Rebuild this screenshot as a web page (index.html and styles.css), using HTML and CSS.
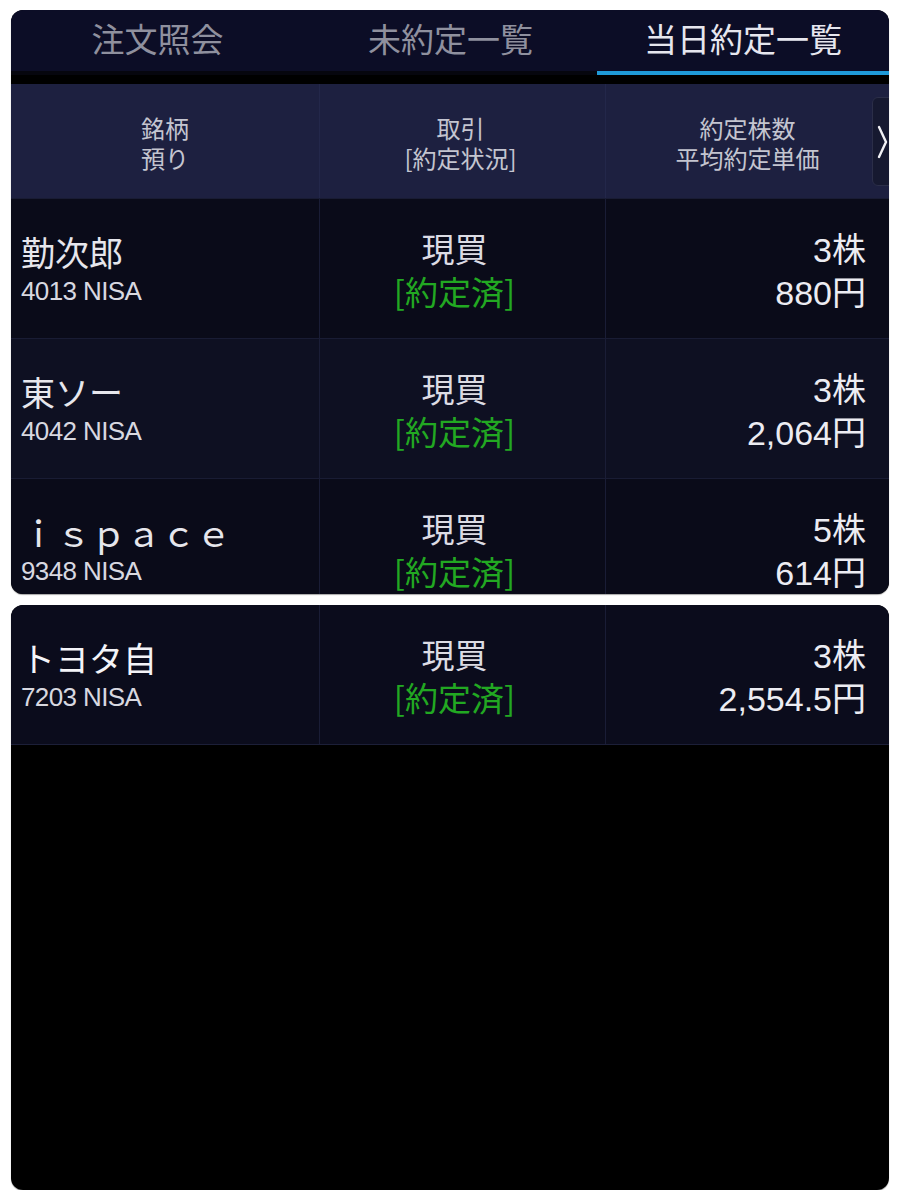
FILE: index.html
```html
<!DOCTYPE html>
<html lang="ja">
<head>
<meta charset="utf-8">
<title>当日約定一覧</title>
<link rel="stylesheet" href="styles.css">
</head>
<body>
<div class="panel top">
  <div class="tabs">
    <div class="tab">注文照会</div>
    <div class="tab">未約定一覧</div>
    <div class="tab active">当日約定一覧</div>
  </div>
  <div class="strip"></div>
  <div class="head">
    <div class="hcell"><div>銘柄</div><div>預り</div></div>
    <div class="hcell"><div>取引</div><div>[約定状況]</div></div>
    <div class="hcell"><div>約定株数</div><div>平均約定単価</div></div>
    <div class="scroll-btn">
      <svg width="14" height="34" viewBox="0 0 14 34"><polyline points="3,2 10,17 3,32" fill="none" stroke="#f0f0f4" stroke-width="2.4" stroke-linecap="round" stroke-linejoin="round"/></svg>
    </div>
  </div>
  <div class="row dark">
    <div class="cell name"><div class="nm">勤次郎</div><div class="code">4013 NISA</div></div>
    <div class="cell trade"><div class="kind">現買</div><div class="status">[約定済]</div></div>
    <div class="cell qty"><div>3株</div><div>880円</div></div>
  </div>
  <div class="row light">
    <div class="cell name"><div class="nm">東ソー</div><div class="code">4042 NISA</div></div>
    <div class="cell trade"><div class="kind">現買</div><div class="status">[約定済]</div></div>
    <div class="cell qty"><div>3株</div><div>2,064円</div></div>
  </div>
  <div class="row dark">
    <div class="cell name"><div class="nm wide">ｉｓｐａｃｅ</div><div class="code">9348 NISA</div></div>
    <div class="cell trade"><div class="kind">現買</div><div class="status">[約定済]</div></div>
    <div class="cell qty"><div>5株</div><div>614円</div></div>
  </div>
</div>
<div class="panel bottom">
  <div class="row mid">
    <div class="cell name"><div class="nm bright">トヨタ自</div><div class="code">7203 NISA</div></div>
    <div class="cell trade"><div class="kind">現買</div><div class="status">[約定済]</div></div>
    <div class="cell qty"><div>3株</div><div>2,554.5円</div></div>
  </div>
</div>
</body>
</html>
```
FILE: styles.css
```css
html, body {
  margin: 0;
  padding: 0;
  background: #ffffff;
}
body {
  padding: 10px 11px 0 11px;
  font-family: "Liberation Sans", "Noto Sans CJK JP", sans-serif;
  color: #e8e8ee;
}
.panel {
  width: 878px;
  border-radius: 12px;
  overflow: hidden;
  background: #000;
  box-shadow: 0 1px 1px rgba(0,0,0,0.35);
}
.top {
  height: 584px;
}
.bottom {
  margin-top: 11px;
  height: 585px;
}
.tabs {
  display: grid;
  grid-template-columns: 293px 293px 292px;
  background: #0c0d26;
}
.tab {
  height: 65px;
  display: flex;
  align-items: center;
  justify-content: center;
  padding-bottom: 6px;
  box-sizing: border-box;
  font-family: "Noto Sans CJK JP", sans-serif;
  font-size: 33px;
  color: #8f909e;
  border-bottom: 4px solid #06060e;
}
.tab.active {
  color: #e6e6ee;
  border-bottom-color: #1f9ad8;
}
.strip {
  height: 9px;
  background: #000;
}
.head {
  position: relative;
  display: grid;
  grid-template-columns: 309px 286px 283px;
  height: 114px;
  background: #1d2040;
}
.hcell {
  padding-top: 29px;
  text-align: center;
  font-family: "Noto Sans CJK JP", sans-serif;
  font-size: 24px;
  line-height: 30px;
  color: #c4c5d0;
  border-right: 1px solid #23274a;
}
.hcell:nth-child(2) { padding-right: 4px; }
.hcell:nth-child(3) { border-right: none; }
.scroll-btn {
  position: absolute;
  left: 861px;
  top: 13px;
  width: 34px;
  height: 89px;
  box-sizing: border-box;
  background: #161930;
  border: 1px solid #2b2e48;
  border-radius: 6px;
  padding-left: 3px;
  display: flex;
  align-items: center;
}
.row {
  display: grid;
  grid-template-columns: 309px 286px 283px;
  height: 140px;
  border-top: 1px solid #191c34;
  box-sizing: border-box;
}
.row.dark { background: #0a0b19; }
.row.light { background: #0e1022; }
.row.mid { background: #0b0c1c; border-top: none; border-bottom: 1px solid #1c1f38; }
.cell {
  border-right: 1px solid #1a1d36;
  box-sizing: border-box;
}
.cell.qty { border-right: none; }
.name {
  padding: 31px 0 0 10px;
}
.nm {
  font-family: "Noto Sans CJK JP", sans-serif;
  font-size: 34px;
  line-height: 44px;
  color: #e6e6ec;
}
.nm.wide { font-size: 35px; }
.nm.bright { color: #f4f4f8; }
.code {
  margin-top: 2px;
  font-size: 26px;
  line-height: 30px;
  color: #d8d8e0;
  letter-spacing: -0.6px;
}
.trade {
  padding: 28px 16px 0 0;
  text-align: center;
  font-family: "Noto Sans CJK JP", sans-serif;
  font-size: 33px;
  line-height: 43px;
}
.kind { color: #dcdce4; }
.status { color: #22a822; }
.qty {
  padding: 30px 23px 0 0;
  text-align: right;
  font-size: 34px;
  line-height: 43px;
  color: #ececf2;
}
```
